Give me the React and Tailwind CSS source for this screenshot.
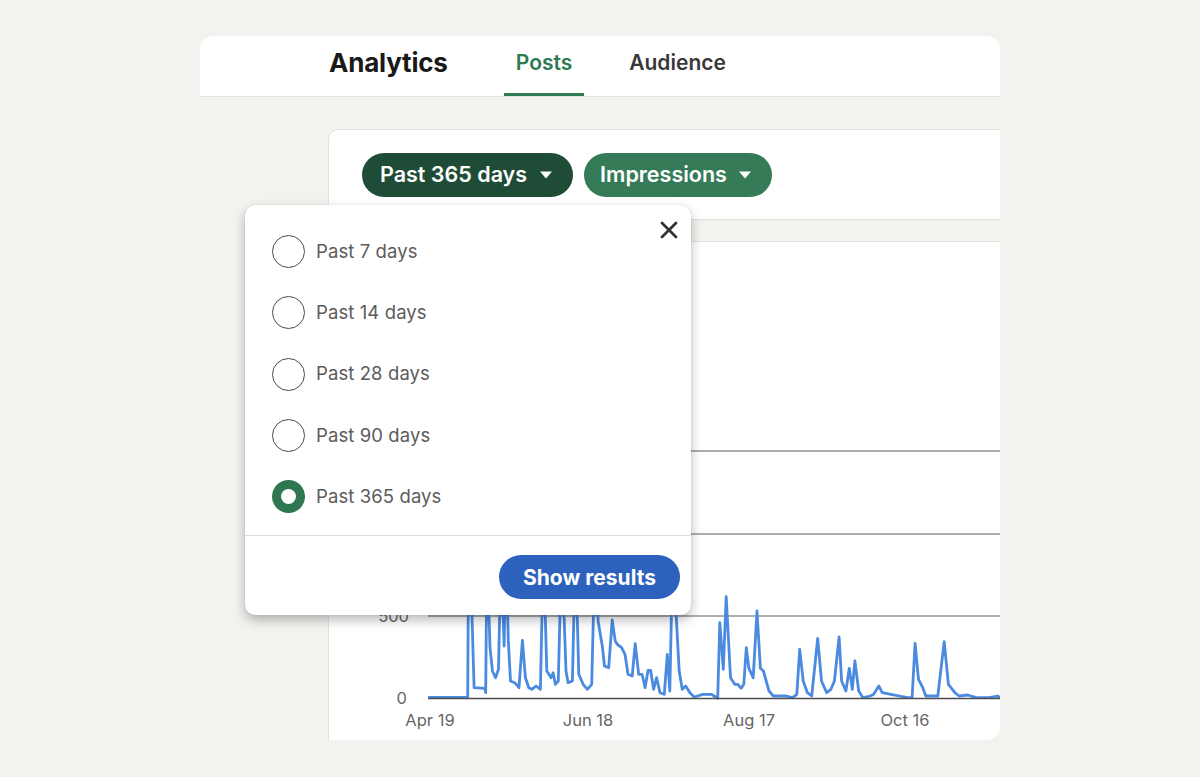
import React from "react";

const Z = [[230,349],[320,349],[322,-100],[330,107],[335,320],[360,322],[362,335],[365,-100],[372,200],[378,270],[385,290],[392,265],[398,-100],[405,195],[410,-100],[415,180],[420,300],[430,305],[440,320],[448,178],[455,290],[463,320],[470,325],[480,315],[490,325],[497,-100],[505,270],[515,290],[520,275],[525,310],[532,300],[540,-100],[550,270],[555,305],[565,300],[572,-100],[580,280],[590,310],[600,325],[610,310],[618,-100],[625,120],[635,195],[640,255],[650,260],[658,117],[665,180],[670,190],[680,200],[688,220],[695,280],[705,285],[712,188],[720,280],[728,280],[735,320],[742,268],[748,268],[755,325],[762,290],[770,335],[780,340],[787,220],[793,330],[800,-100],[808,110],[815,270],[822,325],[830,315],[840,335],[850,348],[870,340],[890,340],[905,352],[910,125],[918,265],[925,47],[935,290],[945,310],[952,310],[960,322],[966,310],[972,200],[978,262],[988,290],[997,90],[1005,262],[1012,270],[1025,330],[1035,345],[1050,345],[1065,345],[1080,350],[1090,340],[1097,205],[1105,300],[1115,335],[1125,345],[1139,172],[1148,300],[1160,335],[1170,325],[1178,300],[1189,168],[1195,300],[1205,330],[1213,262],[1220,325],[1226,240],[1235,330],[1245,350],[1262,345],[1270,340],[1282,315],[1290,335],[1310,340],[1330,345],[1350,350],[1360,350],[1367,187],[1375,295],[1385,320],[1392,345],[1420,345],[1435,182],[1445,310],[1460,335],[1470,345],[1490,342],[1510,350],[1540,350],[1560,345],[1568,352]];

const points = Z.map(([zx, zy]) => `${(330 + (zx * 670) / 1568 - 328).toFixed(1)},${(580 + zy / 3 - 241).toFixed(1)}`).join(" ");

function Caret() {
  return (
    <svg width="14" height="8" viewBox="0 0 14 8" className="shrink-0">
      <path d="M1 0.5 L13 0.5 L7 7.5 Z" fill="white" />
    </svg>
  );
}

function Radio({ checked }) {
  if (checked) {
    return (
      <span className="w-[33px] h-[33px] rounded-full bg-[#2f7652] flex items-center justify-center shrink-0">
        <span className="w-[15px] h-[15px] rounded-full bg-white" />
      </span>
    );
  }
  return <span className="w-[33px] h-[33px] rounded-full border-[1.5px] border-[#4a4a4a] shrink-0" />;
}

const options = ["Past 7 days", "Past 14 days", "Past 28 days", "Past 90 days", "Past 365 days"];

export default function App() {
  return (
    <div
      className="min-h-[777px] w-full bg-[#f3f2ef] pt-[36px]"
      style={{ fontFamily: "Inter, 'Noto Sans', 'Liberation Sans', sans-serif" }}
    >
      <div className="relative ml-[200px] w-[800px] h-[704px] rounded-[14px] overflow-hidden flex flex-col">
        <header className="h-[61px] shrink-0 bg-white border-b border-[#e3e2df] flex pl-[129px]">
          <div className="h-full flex items-center pb-[8px] text-[26px] font-bold text-[#191919] tracking-[-0.2px]">
            Analytics
          </div>
          <nav className="ml-[56px] flex h-full gap-[33px]">
            <div className="relative h-full flex items-center pb-[6px] px-3 text-[21px] font-semibold text-[#2e7a53]">
              Posts
              <span className="absolute left-0 right-0 bottom-0 h-[3px] bg-[#2e7a53]" />
            </div>
            <div className="relative h-full flex items-center pb-[6px] px-3 text-[21px] font-semibold text-[#383838]">
              Audience
            </div>
          </nav>
        </header>

        <main className="flex-1 flex flex-col pl-[128px] pt-[32px] gap-[21px] min-h-0">
          <section className="h-[91px] shrink-0 bg-white rounded-tl-[10px] border-t border-l border-b border-[#e3e2df] flex items-center gap-[11px] pl-[33px]">
            <button className="h-[44px] rounded-full bg-[#1e4c36] text-white text-[21.5px] font-semibold flex items-center gap-[12px] pl-[18px] pr-[20px]">
              Past 365 days
              <Caret />
            </button>
            <button className="h-[44px] rounded-full bg-[#357b58] text-white text-[21.5px] font-semibold flex items-center gap-[11px] pl-[16px] pr-[20px]">
              Impressions
              <Caret />
            </button>
          </section>

          <section className="flex-1 bg-white border-t border-l border-[#e3e2df] relative">
            <svg width="672" height="499" viewBox="0 0 672 499" className="block">
              {[209, 292, 374].map((y) => (
                <line key={y} x1="99" x2="672" y1={y} y2={y} stroke="#5f5f5f" strokeWidth="1.2" />
              ))}
              <g fill="#666666" fontSize="16.5" fontFamily="Inter, 'Noto Sans', sans-serif" textAnchor="end">
                <text x="80" y="380">500</text>
                <text x="78" y="462">0</text>
              </g>
              <polyline
                points={points}
                fill="none"
                stroke="#4a8ae0"
                strokeWidth="2.8"
                strokeLinejoin="round"
                strokeLinecap="round"
              />
              <line x1="99" x2="672" y1="456.5" y2="456.5" stroke="#4d4d4d" strokeWidth="1.4" />
              <g fill="#666666" fontSize="16.5" fontFamily="Inter, 'Noto Sans', sans-serif" textAnchor="middle">
                <text x="101" y="484">Apr 19</text>
                <text x="259" y="484">Jun 18</text>
                <text x="420" y="484">Aug 17</text>
                <text x="576" y="484">Oct 16</text>
              </g>
            </svg>
          </section>
        </main>

        <div className="absolute left-[45px] top-[169px] w-[446px] h-[410px] bg-white rounded-[10px] shadow-[0_5px_12px_rgba(0,0,0,0.28),0_0_1px_rgba(0,0,0,0.2)] flex flex-col">
          <button className="absolute right-[13px] top-[16px] w-[18px] h-[18px]">
            <svg width="18" height="18" viewBox="0 0 18 18">
              <path d="M2 2 L16 16 M16 2 L2 16" stroke="#333333" strokeWidth="2.8" strokeLinecap="round" />
            </svg>
          </button>
          <ul className="flex flex-col pt-[16px] pb-[8px]">
            {options.map((o, i) => (
              <li key={o} className="h-[61.3px] flex items-center gap-[11px] pl-[27px]">
                <Radio checked={i === 4} />
                <span className="text-[18.5px] text-[#5c5c5c] tracking-[0.1px]">{o}</span>
              </li>
            ))}
          </ul>
          <div className="border-t border-[#d9d9d9] flex-1 flex items-start justify-end pt-[19px] pr-[11px]">
            <button className="h-[44px] w-[181px] rounded-full bg-[#2c62bd] text-white text-[21px] font-bold">
              Show results
            </button>
          </div>
        </div>
      </div>
    </div>
  );
}
